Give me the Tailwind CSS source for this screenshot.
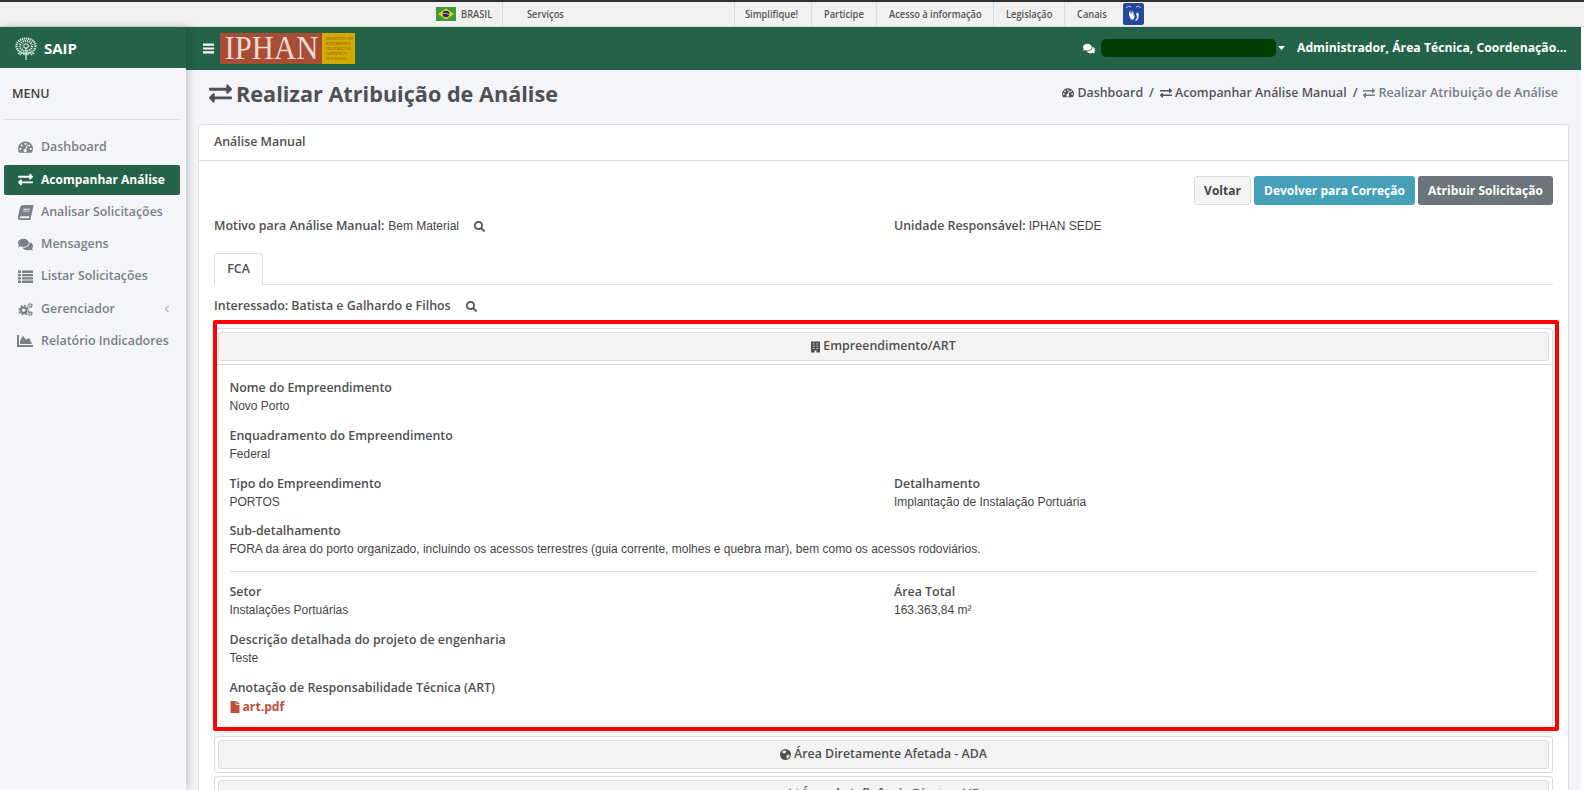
<!DOCTYPE html>
<html lang="pt-BR">
<head>
<meta charset="utf-8">
<title>SAIP</title>
<script src="https://cdn.jsdelivr.net/npm/@tailwindcss/browser@4"></script>
</head>
<body class="relative w-[1584px] h-[790px] overflow-hidden bg-white font-['Open_Sans',sans-serif] text-[12.4px] font-semibold text-[#505050]">

<!-- barra Brasil -->
<div class="flex h-[27px] items-stretch border-t-2 border-b border-t-[#2f2f2f] border-b-[#dcdcdc] bg-[#f1f1f1] pl-[436px] text-[10px] leading-none text-[#555]">
  <div class="flex w-[66px] items-center">
    <svg class="mr-[5px] h-[14px] w-[20px]" viewBox="0 0 20 14"><rect width="20" height="14" fill="#3a9a41"/><path d="M10 1.5 18 7 10 12.5 2 7z" fill="#f0d000"/><circle cx="10" cy="7" r="3.3" fill="#1c2a78"/><path d="M7 6.5q3-.8 6 1.2" stroke="#fff" stroke-width=".6" fill="none"/></svg>
    <span class="inline-block origin-left scale-x-[0.93] whitespace-nowrap">BRASIL</span>
  </div>
  <div class="flex w-[232px] items-center border-l border-[#ddd] pl-[24px]"><span class="inline-block origin-left scale-x-[0.93]">Serviços</span></div>
  <div class="flex w-[77px] items-center border-l border-[#ddd] pl-[10px]"><span class="inline-block origin-left scale-x-[0.93] whitespace-nowrap">Simplifique!</span></div>
  <div class="flex w-[65px] items-center border-l border-[#ddd] pl-[12px]"><span class="inline-block origin-left scale-x-[0.93]">Participe</span></div>
  <div class="flex w-[117px] items-center border-l border-[#ddd] pl-[12px]"><span class="inline-block origin-left scale-x-[0.93] whitespace-nowrap">Acesso à informação</span></div>
  <div class="flex w-[71px] items-center border-l border-[#ddd] pl-[12px]"><span class="inline-block origin-left scale-x-[0.93]">Legislação</span></div>
  <div class="flex w-[59px] items-center border-l border-[#ddd] pl-[12px]"><span class="inline-block origin-left scale-x-[0.93]">Canais</span></div>
  <svg class="mt-px h-[22px] w-[21px]" viewBox="0 0 21 22"><rect width="21" height="22" rx="2" fill="#26479c"/><path d="M3 5q2-3 5-1M13 4q3-2 5 1" stroke="#cfe0f5" stroke-width=".8" fill="none"/><path d="M6 8l1.500 3V7l1 4 .5-4.500.8 4.500 1-3-.3 5 1.500-1-1.500 4.500H8L6 12z" fill="#fff"/><path d="M13 11l1.500-2 .5 2 1-1-.5 5-2 3-1.500-.5 2-3z" fill="#dfe9f8"/></svg>
</div>

<div class="flex h-[763px]">
  <!-- barra lateral -->
  <aside class="relative z-10 h-full w-[186px] shrink-0 bg-[#f4f5f9] shadow-[3px_0_8px_rgba(0,0,0,0.18)]">
    <div class="flex h-[41px] items-center bg-[#24634a] pl-[14px] pt-[1px] text-[15px] font-bold text-white">
      <svg class="mr-[6px] h-[24px] w-[24px]" viewBox="0 0 24 24" fill="none" stroke="#d8e6dd">
        <ellipse cx="12" cy="10" rx="9.500" ry="7.500" stroke-width="2.200" stroke-dasharray="1.400 .7"/>
        <ellipse cx="12" cy="10" rx="6" ry="5" stroke-width="2.200" stroke-dasharray="1.200 .8"/>
        <ellipse cx="12" cy="10" rx="2.500" ry="2" stroke-width="1.800" stroke-dasharray="1 .6"/>
        <path d="M12 24V11M12 19l-6-3M12 19l6-3M4 17l3 2M20 17l-3 2" stroke-width="1.500" stroke-dasharray="1.600 .5"/>
      </svg>
      SAIP
    </div>
    <div class="ml-[4px] mr-[6px] flex h-[52px] items-center border-b border-[#dedfe3] pl-[8px] text-[12.500px] leading-none text-[#3d3d3d]"><span class="relative top-[1px]">MENU</span></div>
    <nav class="ml-[4px] mr-[6px] mt-[11.400px] flex flex-col text-[#7b7f87]">
      <a class="flex h-[32.300px] items-center pl-[14px]">
        <svg class="mr-[8px] h-[15px] w-[15px] fill-[#7b7f87]" viewBox="0 0 24 24"><path fill-rule="evenodd" d="M12 2.500A11.500 11.500 0 0 0 2.200 20.500h19.600A11.500 11.500 0 0 0 12 2.500zM12 4.500a1.700 1.700 0 1 1 0 3.400 1.700 1.700 0 0 1 0-3.400zM6 7a1.700 1.700 0 1 1 0 3.400A1.700 1.700 0 0 1 6 7zM3.700 12.500a1.700 1.700 0 1 1 0 3.400 1.700 1.700 0 0 1 0-3.400zM20.300 12.500a1.700 1.700 0 1 1 0 3.400 1.700 1.700 0 0 1 0-3.400zM18 7a1.700 1.700 0 1 1 0 3.400A1.700 1.700 0 0 1 18 7zM16 8.500l-3 6.200a2.600 2.600 0 1 1-2-.5l3.400-6.400z"/></svg>
        Dashboard
      </a>
      <a class="my-[1.150px] flex h-[30px] items-center rounded-[2px] bg-[#24634a] pl-[14px] text-white">
        <svg class="mr-[8px] h-[15px] w-[15px] fill-white" viewBox="0 0 512 512"><path d="M0 168v-16c0-13.255 10.745-24 24-24h360V80c0-21.367 25.899-32.042 40.971-16.971l80 80c9.372 9.373 9.372 24.569 0 33.941l-80 80C409.956 271.982 384 261.456 384 240v-48H24c-13.255 0-24-10.745-24-24zm488 152H128v-48c0-21.314-25.862-32.080-40.971-16.971l-80 80c-9.372 9.373-9.372 24.569 0 33.941l80 80C102.057 463.997 128 453.437 128 432v-48h360c13.255 0 24-10.745 24-24v-16c0-13.255-10.745-24-24-24z"/></svg>
        <span class="text-[12px] font-bold">Acompanhar Análise</span>
      </a>
      <a class="flex h-[32.300px] items-center pl-[14px]">
        <svg class="mr-[8px] h-[15px] w-[15px] -skew-x-12 fill-[#7b7f87]" viewBox="0 0 448 512"><path d="M448 360V24c0-13.300-10.700-24-24-24H96C43 0 0 43 0 96v320c0 53 43 96 96 96h328c13.300 0 24-10.700 24-24v-16c0-7.500-3.500-14.300-8.900-18.700-4.200-15.400-4.200-59.300 0-74.700 5.400-4.300 8.900-11.100 8.900-18.600zM128 134c0-3.300 2.700-6 6-6h212c3.300 0 6 2.700 6 6v20c0 3.300-2.700 6-6 6H134c-3.300 0-6-2.700-6-6v-20zm0 64c0-3.300 2.700-6 6-6h212c3.300 0 6 2.700 6 6v20c0 3.300-2.700 6-6 6H134c-3.300 0-6-2.700-6-6v-20zm253.400 250H96c-17.700 0-32-14.300-32-32 0-17.600 14.400-32 32-32h285.400c-1.900 17.100-1.900 46.900 0 64z"/></svg>
        Analisar Solicitações
      </a>
      <a class="flex h-[32.300px] items-center pl-[14px]">
        <svg class="mr-[8px] h-[15px] w-[15px] fill-[#7b7f87]" viewBox="0 0 576 512"><path d="M416 192c0-88.400-93.100-160-208-160S0 103.600 0 192c0 34.300 14.100 65.900 38 92-13.400 30.200-35.500 54.200-35.800 54.500-2.200 2.300-2.800 5.700-1.500 8.700S4.800 352 8 352c36.600 0 66.900-12.300 88.700-25 32.200 15.700 70.300 25 111.300 25 114.900 0 208-71.600 208-160zm122 220c23.900-26 38-57.700 38-92 0-66.900-53.500-124.200-129.300-148.100.9 6.600 1.300 13.300 1.300 20.100 0 105.900-107.700 192-240 192-10.800 0-21.300-.8-31.700-1.900C207.800 439.600 281.800 480 368 480c41 0 79.100-9.200 111.300-25 21.800 12.700 52.100 25 88.700 25 3.200 0 6.100-1.900 7.300-4.800 1.300-2.900.7-6.300-1.500-8.700-.3-.3-22.400-24.200-35.800-54.500z"/></svg>
        Mensagens
      </a>
      <a class="flex h-[32.300px] items-center pl-[14px]">
        <svg class="mr-[8px] h-[15px] w-[15px] fill-[#7b7f87]" viewBox="0 0 15 15"><path d="M0 1.500h3v2.600H0zM4 1.500h11v2.600H4zM0 5h3v2.300H0zM4 5h11v2.300H4zM0 8.200h3v2.300H0zM4 8.200h11v2.300H4zM0 11.400h3V14H0zM4 11.400h11V14H4z"/></svg>
        Listar Solicitações
      </a>
      <a class="relative flex h-[32.300px] items-center pl-[14px]">
        <svg class="mr-[8px] h-[15px] w-[15px]" viewBox="0 0 24 24" fill="none" stroke="#7b7f87"><circle cx="9" cy="13" r="4.500" stroke-width="3.500"/><circle cx="9" cy="13" r="7.300" stroke-width="2.400" stroke-dasharray="2.900 2.830"/><circle cx="19.500" cy="5.500" r="2.300" stroke-width="1.800"/><circle cx="19.500" cy="5.500" r="3.900" stroke-width="1.200" stroke-dasharray="1.500 1.560"/><circle cx="19.500" cy="18.500" r="2.300" stroke-width="1.800"/><circle cx="19.500" cy="18.500" r="3.900" stroke-width="1.200" stroke-dasharray="1.500 1.560"/></svg>
        Gerenciador
        <svg class="absolute left-[160px] top-[12px] h-[8px] w-[6px]" viewBox="0 0 6 8" fill="none" stroke="#8a8e95"><path d="M4.500 1 1.500 4l3 3"/></svg>
      </a>
      <a class="flex h-[32.300px] items-center pl-[13px]">
        <svg class="mr-[8px] h-[16px] w-[16px] fill-[#7b7f87]" viewBox="0 0 512 512"><path d="M500 384c6.600 0 12 5.400 12 12v40c0 6.600-5.400 12-12 12H12c-6.600 0-12-5.400-12-12V76c0-6.600 5.400-12 12-12h40c6.600 0 12 5.400 12 12v308h436zM372.700 159.500L288 216l-85.300-113.700c-5.100-6.800-15.500-6.300-19.900 1L96 248v104h384l-89.900-187.800c-3.200-6.500-11.400-8.700-17.400-4.700z"/></svg>
        Relatório Indicadores
      </a>
    </nav>
  </aside>

  <main class="h-full w-[1395px] overflow-hidden bg-[#f4f5f9]">
    <!-- cabeçalho -->
    <header class="flex h-[43px] items-center bg-[#24634a] text-white">
      <svg class="ml-[17px] h-[11px] w-[11px] fill-white" viewBox="0 0 11 11"><path d="M0 .5h11v2.200H0zM0 4.400h11v2.200H0zM0 8.300h11v2.200H0z"/></svg>
      <div class="ml-[6px] mt-[-1px] flex h-[31px] w-[135px]">
        <div class="flex w-[102px] items-center justify-center bg-[#a84c33] font-['Liberation_Serif',serif] text-[33px] font-normal leading-none text-[#ead9d3]"><span class="inline-block scale-x-[0.93]">IPHAN</span></div>
        <div class="flex w-[33px] flex-col justify-center bg-[#d6a900] pl-[4px] font-['Liberation_Serif',serif] text-[4px] font-normal leading-[5px] text-[#7a5c10]">
          <span>INSTITUTO DO</span><span>PATRIMÔNIO</span><span>HISTÓRICO E</span><span>ARTÍSTICO</span><span>NACIONAL</span>
        </div>
      </div>
      <div class="ml-auto flex items-center">
        <svg class="h-[11px] w-[12px] fill-white" viewBox="0 0 576 512"><path d="M416 192c0-88.400-93.100-160-208-160S0 103.600 0 192c0 34.300 14.100 65.900 38 92-13.400 30.200-35.500 54.200-35.800 54.500-2.200 2.300-2.800 5.700-1.500 8.700S4.800 352 8 352c36.600 0 66.900-12.300 88.700-25 32.200 15.700 70.300 25 111.300 25 114.900 0 208-71.600 208-160zm122 220c23.900-26 38-57.700 38-92 0-66.900-53.500-124.200-129.300-148.100.9 6.600 1.300 13.300 1.300 20.100 0 105.900-107.700 192-240 192-10.800 0-21.300-.8-31.700-1.900C207.800 439.600 281.800 480 368 480c41 0 79.100-9.200 111.300-25 21.800 12.700 52.100 25 88.700 25 3.200 0 6.100-1.900 7.300-4.800 1.300-2.900.7-6.300-1.500-8.700-.3-.3-22.400-24.200-35.800-54.500z"/></svg>
        <div class="ml-[6px] h-[18px] w-[175px] rounded-[5px] bg-[#003f00]"></div>
        <svg class="ml-[2px] h-[4px] w-[7px] fill-white" viewBox="0 0 7 4"><path d="M0 0h7L3.500 4z"/></svg>
        <span class="ml-[12px] mr-[18px] w-[266px] whitespace-nowrap text-[12.200px] font-bold">Administrador, Área Técnica, Coordenação...</span>
      </div>
    </header>

    <!-- título -->
    <div class="flex h-[54px] items-center pb-[7px] pl-[23px] pr-[23px]">
      <svg class="mr-[4px] h-[23px] w-[23px] fill-[#505050]" viewBox="0 0 512 512"><path d="M0 168v-16c0-13.255 10.745-24 24-24h360V80c0-21.367 25.899-32.042 40.971-16.971l80 80c9.372 9.373 9.372 24.569 0 33.941l-80 80C409.956 271.982 384 261.456 384 240v-48H24c-13.255 0-24-10.745-24-24zm488 152H128v-48c0-21.314-25.862-32.080-40.971-16.971l-80 80c-9.372 9.373-9.372 24.569 0 33.941l80 80C102.057 463.997 128 453.437 128 432v-48h360c13.255 0 24-10.745 24-24v-16c0-13.255-10.745-24-24-24z"/></svg>
      <h1 class="text-[21.650px] font-bold leading-none text-[#505050]">Realizar Atribuição de Análise</h1>
      <div class="ml-auto mb-[1px] flex items-center text-[#555]">
        <svg class="mr-[3px] h-[12px] w-[12px] fill-[#555]" viewBox="0 0 24 24"><path fill-rule="evenodd" d="M12 2.500A11.500 11.500 0 0 0 2.200 20.500h19.600A11.500 11.500 0 0 0 12 2.500zM12 4.500a1.700 1.700 0 1 1 0 3.400 1.700 1.700 0 0 1 0-3.400zM6 7a1.700 1.700 0 1 1 0 3.400A1.700 1.700 0 0 1 6 7zM3.700 12.500a1.700 1.700 0 1 1 0 3.400 1.700 1.700 0 0 1 0-3.400zM20.300 12.500a1.700 1.700 0 1 1 0 3.400 1.700 1.700 0 0 1 0-3.400zM18 7a1.700 1.700 0 1 1 0 3.400A1.700 1.700 0 0 1 18 7zM16 8.500l-3 6.200a2.600 2.600 0 1 1-2-.5l3.400-6.400z"/></svg>
        Dashboard
        <span class="mx-[6px]">/</span>
        <svg class="mr-[3px] h-[12px] w-[12px] fill-[#555]" viewBox="0 0 512 512"><path d="M0 168v-16c0-13.255 10.745-24 24-24h360V80c0-21.367 25.899-32.042 40.971-16.971l80 80c9.372 9.373 9.372 24.569 0 33.941l-80 80C409.956 271.982 384 261.456 384 240v-48H24c-13.255 0-24-10.745-24-24zm488 152H128v-48c0-21.314-25.862-32.080-40.971-16.971l-80 80c-9.372 9.373-9.372 24.569 0 33.941l80 80C102.057 463.997 128 453.437 128 432v-48h360c13.255 0 24-10.745 24-24v-16c0-13.255-10.745-24-24-24z"/></svg>
        Acompanhar Análise Manual
        <span class="mx-[6px]">/</span>
        <svg class="mr-[3px] h-[12px] w-[12px] fill-[#777b84]" viewBox="0 0 512 512"><path d="M0 168v-16c0-13.255 10.745-24 24-24h360V80c0-21.367 25.899-32.042 40.971-16.971l80 80c9.372 9.373 9.372 24.569 0 33.941l-80 80C409.956 271.982 384 261.456 384 240v-48H24c-13.255 0-24-10.745-24-24zm488 152H128v-48c0-21.314-25.862-32.080-40.971-16.971l-80 80c-9.372 9.373-9.372 24.569 0 33.941l80 80C102.057 463.997 128 453.437 128 432v-48h360c13.255 0 24-10.745 24-24v-16c0-13.255-10.745-24-24-24z"/></svg>
        <span class="text-[12.550px] text-[#777b84]">Realizar Atribuição de Análise</span>
      </div>
    </div>

    <!-- painel -->
    <section class="ml-[12px] w-[1371px] rounded-t-[3px] border border-[#dfe0e4] bg-white">
      <div class="flex h-[36px] items-center border-b border-[#dfe0e4] pl-[15px]">Análise Manual</div>
      <div class="px-[15px]">
        <div class="flex justify-end gap-[3px] pt-[15px]">
          <button class="h-[29px] w-[57px] rounded-[3px] border border-[#ddd] bg-[#f4f4f4] text-[12px] font-bold text-[#444]">Voltar</button>
          <button class="h-[29px] w-[161px] rounded-[3px] bg-[#46a0b9] text-[12px] font-bold text-white">Devolver para Correção</button>
          <button class="h-[29px] w-[135px] rounded-[3px] bg-[#6c757d] text-[12px] font-bold text-white">Atribuir Solicitação</button>
        </div>
        <div class="mt-[12px] flex h-[18px] items-center leading-[18px]">
          <div class="flex w-[680px] items-center">
            <span>Motivo para Análise Manual:</span>
            <span class="ml-[4px] font-['Liberation_Sans',sans-serif] text-[12px] font-normal text-[#444]">Bem Material</span>
            <svg class="ml-[15px] h-[11px] w-[11px] fill-[#505050]" viewBox="0 0 512 512"><path d="M505 442.700L405.300 343c-4.500-4.500-10.600-7-17-7H372c27.600-35.300 44-79.700 44-128C416 93.100 322.900 0 208 0S0 93.100 0 208s93.100 208 208 208c48.300 0 92.700-16.400 128-44v16.300c0 6.400 2.500 12.500 7 17l99.700 99.700c9.400 9.400 24.600 9.400 33.900 0l28.300-28.300c9.400-9.400 9.400-24.600.1-34zM208 336c-70.700 0-128-57.200-128-128 0-70.700 57.200-128 128-128 70.700 0 128 57.200 128 128 0 70.700-57.200 128-128 128z"/></svg>
          </div>
          <div>
            <span>Unidade Responsável:</span>
            <span class="font-['Liberation_Sans',sans-serif] text-[12px] font-normal text-[#444]">IPHAN SEDE</span>
          </div>
        </div>
        <div class="mt-[18px] flex h-[32px] border-b border-[#dfe0e4]">
          <div class="flex h-[32px] w-[49px] items-center justify-center rounded-t-[3px] border border-b-0 border-[#dfe0e4] bg-white">FCA</div>
        </div>
        <div class="mt-[12px] flex h-[18px] items-center">
          <span>Interessado: Batista e Galhardo e Filhos</span>
          <svg class="ml-[15px] h-[11px] w-[11px] fill-[#505050]" viewBox="0 0 512 512"><path d="M505 442.700L405.300 343c-4.500-4.500-10.600-7-17-7H372c27.600-35.300 44-79.700 44-128C416 93.100 322.900 0 208 0S0 93.100 0 208s93.100 208 208 208c48.300 0 92.700-16.400 128-44v16.300c0 6.400 2.500 12.500 7 17l99.700 99.700c9.400 9.400 24.600 9.400 33.900 0l28.300-28.300c9.400-9.400 9.400-24.600.1-34zM208 336c-70.700 0-128-57.200-128-128 0-70.700 57.200-128 128-128 70.700 0 128 57.200 128 128 0 70.700-57.200 128-128 128z"/></svg>
        </div>

        <!-- acordeão -->
        <div class="mt-[13px] flex flex-col gap-[3px]">
          <div class="h-[405px] rounded-[3px] border border-[#ddd]">
            <div class="m-[3px] flex h-[29px] items-center justify-center rounded-[3px] border border-[#ddd] bg-[#f3f3f3] text-[#505050]">
              <svg class="mr-[3px] h-[12px] w-[9px] fill-[#505050]" viewBox="0 0 10 12"><path fill-rule="evenodd" d="M0 0h10v12H6V10H4v2H0zM2 2v1h2V2zM6 2v1h2V2zM2 4.500v1h2v-1zM6 4.500v1h2v-1zM2 7v1h2V7zM6 7v1h2V7z"/></svg>
              Empreendimento/ART
            </div>
            <div class="border-t border-[#ddd] pl-[14.500px] pr-[15px] pt-[14px]">
              <div class="h-[47.800px]"><div class="leading-[18px]">Nome do Empreendimento</div><div class="font-['Liberation_Sans',sans-serif] text-[12px] font-normal leading-[18px] text-[#444]">Novo Porto</div></div>
              <div class="h-[47.800px]"><div class="leading-[18px]">Enquadramento do Empreendimento</div><div class="font-['Liberation_Sans',sans-serif] text-[12px] font-normal leading-[18px] text-[#444]">Federal</div></div>
              <div class="flex h-[47.800px]">
                <div class="w-[664.500px]"><div class="leading-[18px]">Tipo do Empreendimento</div><div class="font-['Liberation_Sans',sans-serif] text-[12px] font-normal leading-[18px] text-[#444]">PORTOS</div></div>
                <div><div class="leading-[18px]">Detalhamento</div><div class="font-['Liberation_Sans',sans-serif] text-[12px] font-normal leading-[18px] text-[#444]">Implantação de Instalação Portuária</div></div>
              </div>
              <div class="h-[47.800px]"><div class="leading-[18px]">Sub-detalhamento</div><div class="font-['Liberation_Sans',sans-serif] text-[12px] font-normal leading-[18px] text-[#444]">FORA da área do porto organizado, incluindo os acessos terrestres (guia corrente, molhes e quebra mar), bem como os acessos rodoviários.</div></div>
              <div class="mb-[11px] mt-[1px] h-px bg-[#ddd]"></div>
              <div class="flex h-[47.800px]">
                <div class="w-[664.500px]"><div class="leading-[18px]">Setor</div><div class="font-['Liberation_Sans',sans-serif] text-[12px] font-normal leading-[18px] text-[#444]">Instalações Portuárias</div></div>
                <div><div class="leading-[18px]">Área Total</div><div class="font-['Liberation_Sans',sans-serif] text-[12px] font-normal leading-[18px] text-[#444]">163.363,84 m²</div></div>
              </div>
              <div class="h-[47.800px]"><div class="leading-[18px]">Descrição detalhada do projeto de engenharia</div><div class="font-['Liberation_Sans',sans-serif] text-[12px] font-normal leading-[18px] text-[#444]">Teste</div></div>
              <div><div class="leading-[18px]">Anotação de Responsabilidade Técnica (ART)</div>
                <a class="mt-[1.500px] flex h-[18px] items-center text-[12.200px] font-bold text-[#bd4f3c]">
                  <svg class="mr-[3px] h-[12px] w-[10px] fill-[#bd4f3c]" viewBox="0 0 384 512"><path d="M224 136V0H24C10.700 0 0 10.700 0 24v464c0 13.300 10.700 24 24 24h336c13.300 0 24-10.700 24-24V160H248c-13.200 0-24-10.800-24-24zm160-14.100v6.100H256V0h6.100c6.400 0 12.500 2.500 17 7l97.900 98c4.500 4.500 7 10.600 7 16.900z"/></svg>
                  art.pdf
                </a>
              </div>
            </div>
          </div>

          <div class="h-[37px] rounded-[3px] border border-[#ddd]">
            <div class="m-[3px] flex h-[29px] items-center justify-center rounded-[3px] border border-[#ddd] bg-[#f3f3f3]">
              <svg class="mr-[3px] h-[11px] w-[11px]" viewBox="0 0 12 12"><circle cx="6" cy="6" r="6" fill="#505050"/><path d="M3 2l3-.5 1 1.500-2 2-2.500-1zM7 7l3-1 .5 2-2 2.500-1.500-1z" fill="#f3f3f3"/></svg>
              Área Diretamente Afetada - ADA
            </div>
          </div>

          <div class="h-[37px] rounded-[3px] border border-[#ddd]">
            <div class="m-[3px] flex h-[29px] items-center justify-center rounded-[3px] border border-[#ddd] bg-[#f3f3f3]">
              <svg class="mr-[3px] h-[11px] w-[12px] fill-[#505050]" viewBox="0 0 12 11"><path d="M0 2l4-2 4 2 4-2v9l-4 2-4-2-4 2z"/></svg>
              Área de Influência Direta - AID
            </div>
          </div>
        </div>
      </div>
    </section>
  </main>
</div>

<!-- destaque vermelho -->
<div class="pointer-events-none absolute left-[212.500px] top-[320px] z-20 h-[411px] w-[1346.500px] rounded-[2px] border-4 border-[#ff0000]"></div>
</body>
</html>
